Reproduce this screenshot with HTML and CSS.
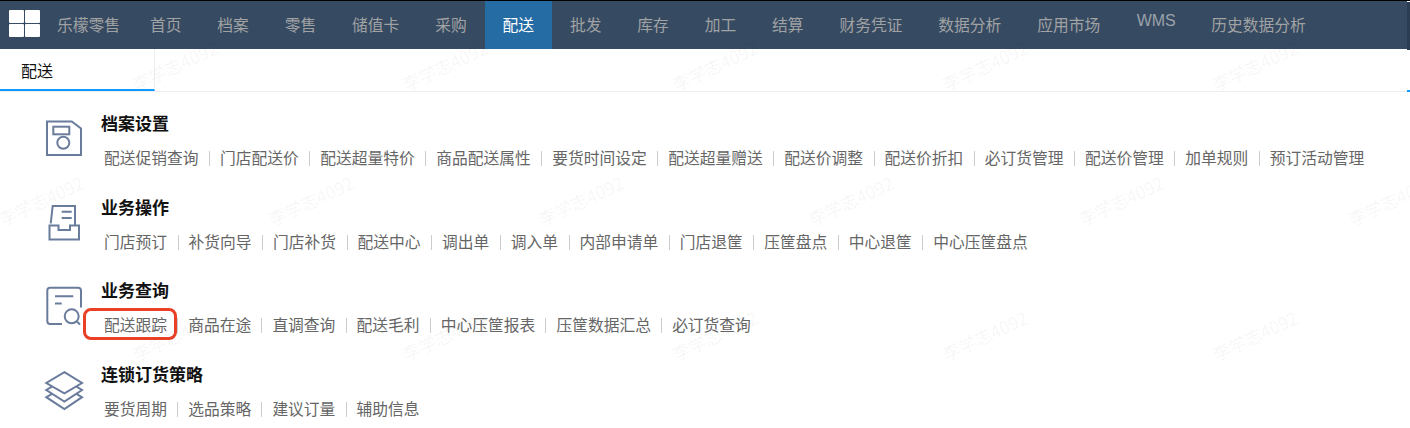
FILE: index.html
```html
<!DOCTYPE html>
<html lang="zh-CN">
<head>
<meta charset="utf-8">
<title>配送</title>
<link rel="stylesheet" href="styles.css">
</head>
<body>
<header class="topbar">
  <div class="logo"><i></i><i></i><i></i><i></i></div>
  <span class="brand">乐檬零售</span>
  <nav class="nav">
    <a>首页</a><a>档案</a><a>零售</a><a>储值卡</a><a>采购</a><a class="on">配送</a><a>批发</a><a>库存</a><a>加工</a><a>结算</a><a>财务凭证</a><a>数据分析</a><a>应用市场</a><a class="wms">WMS</a><a>历史数据分析</a>
  </nav>
</header>
<div class="tabs"><div class="tab">配送</div></div>
<main class="menu">
  <section class="group wide">
    <svg class="ico" viewBox="0 0 40 40"><path d="M3 1.5H27.7L37 8.5V35H3Z"/><rect x="9.3" y="6.7" width="16" height="7.6"/><circle cx="19.3" cy="22.7" r="6"/></svg>
    <div class="body"><h3>档案设置</h3>
      <ul><li>配送促销查询</li><li>门店配送价</li><li>配送超量特价</li><li>商品配送属性</li><li>要货时间设定</li><li>配送超量赠送</li><li>配送价调整</li><li>配送价折扣</li><li>必订货管理</li><li>配送价管理</li><li>加单规则</li><li>预订活动管理</li></ul></div>
  </section>
  <section class="group wide">
    <svg class="ico" viewBox="0 0 40 40"><path d="M6.7 19.5L8.7 2H31V21.5M5.5 21.5H14.5V26H26V21.5H35V35.5H5.5Z M17.7 7.7H27.7 M17.7 14H27.7"/></svg>
    <div class="body"><h3>业务操作</h3>
      <ul><li>门店预订</li><li>补货向导</li><li>门店补货</li><li>配送中心</li><li>调出单</li><li>调入单</li><li>内部申请单</li><li>门店退筐</li><li>压筐盘点</li><li>中心退筐</li><li>中心压筐盘点</li></ul></div>
  </section>
  <section class="group">
    <svg class="ico" viewBox="0 0 40 40"><path d="M18 36.9H6Q3.3 36.9 3.3 34V3.6Q3.3 .8 6 .8H34Q37 .8 37 3.6V20.6M11 9.3H29.3M11 16.6H17.7"/><circle cx="27.7" cy="29.3" r="7"/><path d="M33 34.5L36 37.6"/></svg>
    <div class="body"><h3>业务查询</h3>
      <ul><li class="mark">配送跟踪</li><li>商品在途</li><li>直调查询</li><li>配送毛利</li><li>中心压筐报表</li><li>压筐数据汇总</li><li>必订货查询</li></ul></div>
  </section>
  <section class="group">
    <svg class="ico" viewBox="0 0 40 40"><path d="M20.4 1.2L38 12L20.4 22.4L2.3 12Z M8 15.6L2.3 19L20.4 30.5L38 19L32.5 15.6 M8 22.8L2.3 26.2L20.4 38L38 26.2L32.5 22.8"/></svg>
    <div class="body"><h3>连锁订货策略</h3>
      <ul><li>要货周期</li><li>选品策略</li><li>建议订量</li><li>辅助信息</li></ul></div>
  </section>
</main>
<div class="edge"></div><div class="edge-mark"></div>
<div class="wm r1 x1">李学志4092</div><div class="wm r1 x2">李学志4092</div><div class="wm r1 x3">李学志4092</div><div class="wm r1 x4">李学志4092</div><div class="wm r1 x5">李学志4092</div>
<div class="wm r2 y0">李学志4092</div><div class="wm r2 y1">李学志4092</div><div class="wm r2 y2">李学志4092</div><div class="wm r2 y3">李学志4092</div><div class="wm r2 y4">李学志4092</div><div class="wm r2 y5">李学志4092</div>
<div class="wm r3 x1">李学志4092</div><div class="wm r3 x2">李学志4092</div><div class="wm r3 x3">李学志4092</div><div class="wm r3 x4">李学志4092</div><div class="wm r3 x5">李学志4092</div>
</body>
</html>
```
FILE: styles.css
```css
* { box-sizing: border-box; }
html, body { margin: 0; padding: 0; }
body { position: relative; width: 1410px; height: 428px; overflow: hidden; background: #fff; font-family: "Microsoft YaHei", "Noto Sans CJK SC", sans-serif; }
.topbar { height: 49px; background: #364a61; border-top: 1px solid #000; display: flex; align-items: center; color: #a0a2a4; font-size: 16px; }
.logo { align-self: flex-start; margin: 9px 0 0 9px; width: 31px; height: 27px; display: grid; grid-template-columns: 1fr 1fr; grid-template-rows: 1fr 1fr; gap: 1.5px; }
.logo i { background: #fff; border-radius: 1px; }
.brand { margin: -2px 0 0 17px; font-size: 15.75px; }
.nav { display: flex; margin-left: 12px; height: 100%; }
.nav a { display: flex; align-items: center; padding: 0 17.95px 2px; font-size: 15.75px; }
.nav a.on { background: #256ca4; color: #fff; }
.nav a.wms { align-items: flex-start; padding: 11px 17.5px 0 18.5px; font-family: "Liberation Sans", sans-serif; font-size: 16px; color: #9aa2aa; }
.tabs { height: 43px; border-bottom: 1px solid #eee; }
.tab { width: 155px; height: 42px; padding: 9px 0 0 21px; font-size: 16px; color: #111; border-right: 1px solid #eee; border-bottom: 2px solid #0e9bff; }
.menu { padding-top: 19px; }
.group { display: flex; height: 83.7px; }
.ico { width: 40px; height: 40px; margin: 9px 0 0 44px; fill: none; stroke: #6a7c9c; stroke-width: 2; flex: none; overflow: visible; }
.body { margin-left: 17px; }
h3 { margin: 0; font-size: 17px; line-height: 24px; font-weight: 700; color: #111; }
ul { list-style: none; margin: 12px 0 0; padding: 0 0 0 3px; display: flex; }
li { font-size: 15.75px; line-height: 22px; color: #666; position: relative; padding-right: 21.2px; }
.wide li { padding-right: 21.5px; }
li + li::before { content: ""; position: absolute; left: -11px; top: 4px; width: 1px; height: 15px; background: #ccc; }
.mark::after { content: ""; box-sizing: border-box; position: absolute; left: -21.3px; top: -6.7px; width: 94px; height: 32.5px; border: 3px solid #ea4126; border-radius: 8px; }
.edge { position: absolute; top: 1px; right: 0; width: 3px; height: 49px; background: #2b3d52; border-top: 1px solid #fff; }
.edge-mark { position: absolute; top: 90px; right: 0; width: 3px; height: 2px; background: #0e9bff; }
.wm { position: absolute; font-size: 17.5px; color: rgba(0,0,0,.05); transform: rotate(-25deg); white-space: nowrap; pointer-events: none; }
.r1 { top: 53px; } .r2 { top: 188px; } .r3 { top: 323px; }
.x1 { left: 129px; } .x2 { left: 399px; } .x3 { left: 669px; } .x4 { left: 939px; } .x5 { left: 1209px; }
.y0 { left: -5px; } .y1 { left: 265px; } .y2 { left: 535px; } .y3 { left: 805px; } .y4 { left: 1075px; } .y5 { left: 1345px; }
```
